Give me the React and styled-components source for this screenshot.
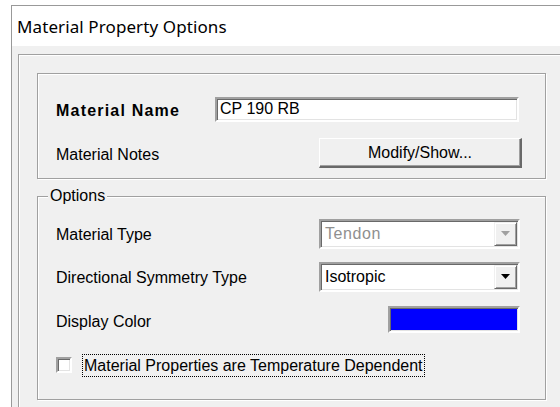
import React from "react";
import styled, { createGlobalStyle } from "styled-components";

const Global = createGlobalStyle`
  html, body {
    margin: 0;
    padding: 0;
    background: #ffffff;
    overflow: hidden;
  }
  body {
    font-family: "Liberation Sans", Arial, sans-serif;
    font-size: 16px;
    color: #000;
  }
`;

const Screen = styled.div`
  padding: 5px 0 0 11px;
  width: 100vw;
  height: 100vh;
  box-sizing: border-box;
  overflow: hidden;
`;

const Window = styled.div`
  border-top: 1px solid #999999;
  border-left: 1px solid #999999;
  height: 100%;
  display: flex;
  flex-direction: column;
`;

const TitleBar = styled.div`
  height: 40px;
  flex: none;
  background: #ffffff;
  display: flex;
  align-items: center;
  padding-left: 5px;
  font-family: "Noto Sans", "Open Sans", sans-serif;
  font-size: 17px;
  letter-spacing: 0.1px;
  color: #000;
`;

const Body = styled.div`
  flex: 1;
  min-height: 0;
  background: #f0f0f0;
  padding: 8px 0 0 6px;
`;

const Panel = styled.div`
  border-top: 1px solid #a0a0a0;
  border-left: 1px solid #a0a0a0;
  box-shadow: inset 1px 1px 0 #ffffff;
  padding: 18px 0 0 18px;
  height: 100%;
  box-sizing: border-box;
`;

const GroupBox = styled.div`
  position: relative;
  width: 509px;
  box-sizing: border-box;
  border: 1px solid #a0a0a0;
  box-shadow: inset 1px 1px 0 #ffffff, 1px 1px 0 #ffffff;
  padding: ${(p) => p.$pad};
  margin-top: ${(p) => p.$mt || 0}px;
  display: flex;
  flex-direction: column;
`;

const Caption = styled.span`
  position: absolute;
  top: -11px;
  left: 10px;
  padding: 0 2px;
  background: #f0f0f0;
  line-height: 20px;
`;

const Row = styled.div`
  height: ${(p) => p.$h}px;
  display: flex;
  align-items: center;
  padding: 0 25px 0 18px;
`;

const Label = styled.span`
  flex: 1;
  font-weight: ${(p) => (p.$bold ? 700 : 400)};
  letter-spacing: ${(p) => (p.$bold ? "1.2px" : "0")};
  padding-top: ${(p) => p.$dy || 0}px;
`;

/* Classic sunken 2px frame used by edit fields, combos and swatches */
const sunken = `
  border-style: solid;
  border-width: 2px;
  border-color: #a0a0a0 #ffffff #ffffff #a0a0a0;
  box-shadow: inset 1px 1px 0 #696969, inset -1px -1px 0 #e3e3e3;
`;

const TextField = styled.div`
  width: 304px;
  height: 25px;
  box-sizing: border-box;
  background: #fff;
  ${sunken}
  margin-right: 1px;
  padding: 0 3px;
  display: flex;
  align-items: center;
  line-height: 20px;
`;

const PushButton = styled.button`
  width: 203px;
  height: 30px;
  box-sizing: border-box;
  margin-right: -2px;
  font: inherit;
  color: #000;
  background: #f0f0f0;
  border-style: solid;
  border-width: 1px 2px 2px 1px;
  border-color: #ffffff #696969 #696969 #ffffff;
  box-shadow: inset -1px -1px 0 #a0a0a0;
  padding: 0;
`;

const Combo = styled.div`
  width: 201px;
  height: 30px;
  box-sizing: border-box;
  background: #fff;
  ${sunken}
  display: flex;
  align-items: stretch;
  color: ${(p) => (p.$disabled ? "#8f8f8f" : "#000")};
`;

const ComboText = styled.span`
  flex: 1;
  padding-left: 4px;
  display: flex;
  align-items: center;
  ${(p) => (p.$disabled ? "letter-spacing: 0.6px;" : "")}
`;

const DropButton = styled.span`
  width: 23px;
  margin: 1px;
  box-sizing: border-box;
  background: #f0f0f0;
  border-style: solid;
  border-width: 1px;
  border-color: #f0f0f0 #696969 #696969 #f0f0f0;
  box-shadow: inset 1px 1px 0 #ffffff, inset -1px -1px 0 #a0a0a0;
  display: flex;
  align-items: center;
  justify-content: center;
`;

const Swatch = styled.div`
  width: 132px;
  height: 27px;
  box-sizing: border-box;
  ${sunken}
  background: ${(p) => p.$color};
`;

const CheckRow = styled.label`
  display: flex;
  align-items: center;
  gap: 10px;
`;

const CheckBox = styled.span`
  width: 16px;
  height: 16px;
  box-sizing: border-box;
  background: #fff;
  ${sunken}
`;

const FocusText = styled.span`
  border: 1px dotted #000;
  padding: 0 1px;
  line-height: 21px;
`;

const Arrow = ({ color }) => (
  <svg width="9" height="5" viewBox="0 0 9 5">
    <path d="M0 0h9L4.5 5z" fill={color} />
  </svg>
);

export default function App() {
  return (
    <>
      <Global />
      <Screen>
        <Window>
          <TitleBar>Material Property Options</TitleBar>
          <Body>
            <Panel>
              <GroupBox $pad="13px 0 3px 0">
                <Row $h={44}>
                  <Label $bold $dy={3}>Material Name</Label>
                  <TextField>CP 190 RB</TextField>
                </Row>
                <Row $h={44}>
                  <Label $dy={3}>Material Notes</Label>
                  <PushButton>Modify/Show...</PushButton>
                </Row>
              </GroupBox>
              <GroupBox $pad="15px 0 10px 0" $mt={17}>
                <Caption>Options</Caption>
                <Row $h={43}>
                  <Label $dy={2}>Material Type</Label>
                  <Combo $disabled>
                    <ComboText $disabled>Tendon</ComboText>
                    <DropButton>
                      <Arrow color="#a0a0a0" />
                    </DropButton>
                  </Combo>
                </Row>
                <Row $h={43}>
                  <Label $dy={2}>Directional Symmetry Type</Label>
                  <Combo>
                    <ComboText>Isotropic</ComboText>
                    <DropButton>
                      <Arrow color="#000" />
                    </DropButton>
                  </Combo>
                </Row>
                <Row $h={43}>
                  <Label $dy={4}>Display Color</Label>
                  <Swatch $color="#0000ff" />
                </Row>
                <Row $h={48}>
                  <CheckRow>
                    <CheckBox />
                    <FocusText>Material Properties are Temperature Dependent</FocusText>
                  </CheckRow>
                </Row>
              </GroupBox>
            </Panel>
          </Body>
        </Window>
      </Screen>
    </>
  );
}
